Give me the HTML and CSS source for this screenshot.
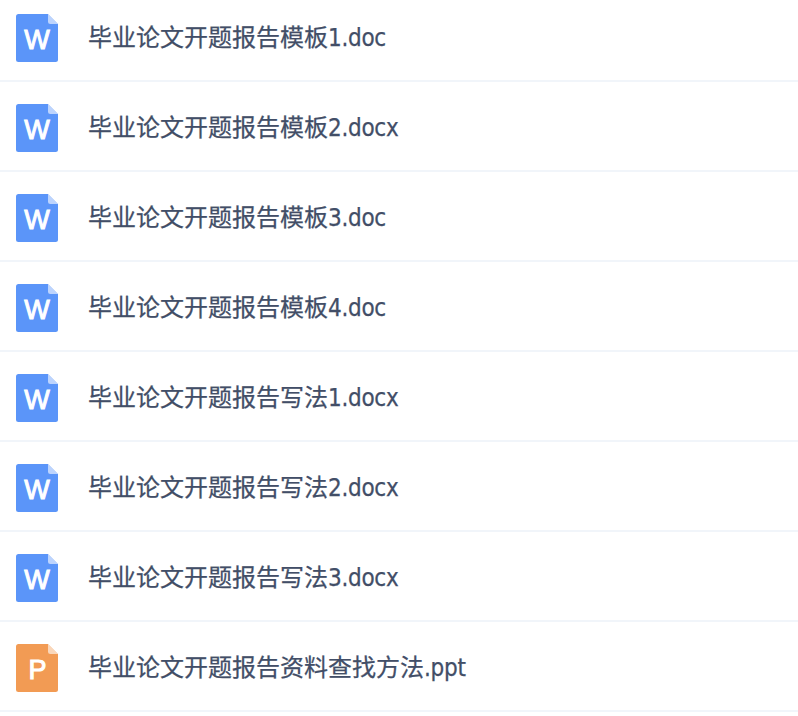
FILE: index.html
```html
<!DOCTYPE html>
<html lang="zh-CN">
<head>
    <meta charset="UTF-8">
    <title>毕业论文开题报告</title>
    <link rel="stylesheet" href="styles.css">
</head>
<body>
    <!--文件图标-->
    <svg class="symbols" width="0" height="0">
        <symbol id="file" viewBox="0 0 42 48">
            <path d="M2.5 0H32L42 10V45.5Q42 48 39.5 48H2.5Q0 48 0 45.5V2.5Q0 0 2.5 0Z" fill="currentColor"/>
            <path class="fold" d="M32 0L42 10H34.5Q32 10 32 7.5Z"/>
        </symbol>
    </svg>
    <ul class="file-list">
        <li>
            <svg class="icon word" viewBox="0 0 42 48"><use href="#file"/><text x="21" y="35">W</text></svg>
            <span class="name">毕业论文开题报告模板<span class="ext">1.doc</span></span>
        </li>
        <li>
            <svg class="icon word" viewBox="0 0 42 48"><use href="#file"/><text x="21" y="35">W</text></svg>
            <span class="name">毕业论文开题报告模板<span class="ext">2.docx</span></span>
        </li>
        <li>
            <svg class="icon word" viewBox="0 0 42 48"><use href="#file"/><text x="21" y="35">W</text></svg>
            <span class="name">毕业论文开题报告模板<span class="ext">3.doc</span></span>
        </li>
        <li>
            <svg class="icon word" viewBox="0 0 42 48"><use href="#file"/><text x="21" y="35">W</text></svg>
            <span class="name">毕业论文开题报告模板<span class="ext">4.doc</span></span>
        </li>
        <li>
            <svg class="icon word" viewBox="0 0 42 48"><use href="#file"/><text x="21" y="35">W</text></svg>
            <span class="name">毕业论文开题报告写法<span class="ext">1.docx</span></span>
        </li>
        <li>
            <svg class="icon word" viewBox="0 0 42 48"><use href="#file"/><text x="21" y="35">W</text></svg>
            <span class="name">毕业论文开题报告写法<span class="ext">2.docx</span></span>
        </li>
        <li>
            <svg class="icon word" viewBox="0 0 42 48"><use href="#file"/><text x="21" y="35">W</text></svg>
            <span class="name">毕业论文开题报告写法<span class="ext">3.docx</span></span>
        </li>
        <li>
            <svg class="icon ppt" viewBox="0 0 42 48"><use href="#file"/><text x="21.5" y="35">P</text></svg>
            <span class="name">毕业论文开题报告资料查找方法<span class="ext">.ppt</span></span>
        </li>
    </ul>
</body>
</html>
```
FILE: styles.css
```css
*{
    margin: 0;
    padding: 0;
    box-sizing: border-box;
}
body{
    background-color: #fff;
    overflow: hidden;
}
.symbols{
    display: block;
}
.file-list{
    list-style-type: none;
    margin-top: -8px;
}
.file-list li{
    display: flex;
    align-items: flex-start;
    height: 90px;
    padding: 22px 16px 0;
    border-bottom: 2px solid #f1f5fa;
}
.icon{
    width: 42px;
    height: 48px;
    flex: none;
}
.icon text{
    font: 27px "Liberation Sans", Arial, sans-serif;
    text-anchor: middle;
    fill: #fff;
    stroke: #fff;
    stroke-width: 1px;
}
.fold{
    fill: #fff;
    fill-opacity: 0.6;
}
.word{
    color: #5b95f9;
}
.ppt{
    color: #f29b54;
}
/*文件名*/
.name{
    margin-left: 30px;
    font-family: "Noto Sans CJK SC", sans-serif;
    font-size: 24px;
    line-height: 44px;
    color: #424e67;
    -webkit-text-stroke: 0.25px #424e67;
    white-space: nowrap;
}
.ext{
    font-family: "DejaVu Sans Condensed", "DejaVu Sans", sans-serif;
    font-stretch: condensed;
    letter-spacing: -0.3px;
}
```
